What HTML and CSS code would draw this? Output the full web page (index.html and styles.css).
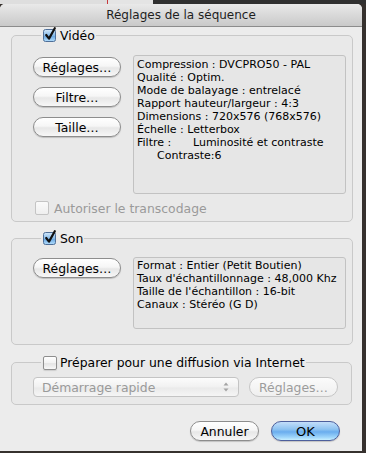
FILE: index.html
```html
<!DOCTYPE html>
<html>
    <head>
        <meta charset="utf-8">
        <link rel="stylesheet" href="styles.css">
    </head>
    <body>
        <div class="window">
            <div class="titlebar">Réglages de la séquence</div>

            <div class="content">
                <fieldset class="group group-video">
                    <legend>
                        <svg class="check" width="14" height="15" viewBox="0 0 14 15">
                            <defs>
                                <linearGradient id="blue" x1="0" y1="0" x2="0" y2="1">
                                    <stop offset="0" stop-color="#d3e8fa"/>
                                    <stop offset="0.5" stop-color="#86bbea"/>
                                    <stop offset="0.55" stop-color="#6aa8e2"/>
                                    <stop offset="1" stop-color="#b4defc"/>
                                </linearGradient>
                            </defs>
                            <rect x="0.5" y="2.5" width="12" height="12" rx="2" fill="url(#blue)" stroke="#4f6f98"/>
                            <path d="M3.2 8 L6 11.6 L11.8 1.2" fill="none" stroke="#111" stroke-width="2.2" stroke-linecap="round" stroke-linejoin="round"/>
                        </svg>
                        Vidéo
                    </legend>
                    <div class="group-row">
                        <div class="buttons">
                            <button class="btn">Réglages…</button>
                            <button class="btn">Filtre…</button>
                            <button class="btn">Taille…</button>
                        </div>
                        <div class="info info-video">
                            <div>Compression : DVCPRO50 - PAL</div>
                            <div>Qualité : Optim.</div>
                            <div>Mode de balayage : entrelacé</div>
                            <div>Rapport hauteur/largeur : 4:3</div>
                            <div>Dimensions : 720x576 (768x576)</div>
                            <div>Échelle : Letterbox</div>
                            <div><span class="tab">Filtre :</span>Luminosité et contraste</div>
                            <div class="indent">Contraste:6</div>
                        </div>
                    </div>
                    <div class="option disabled">
                        <span class="box box-disabled"></span>
                        Autoriser le transcodage
                    </div>
                </fieldset>

                <fieldset class="group group-sound">
                    <legend>
                        <svg class="check" width="14" height="15" viewBox="0 0 14 15">
                            <rect x="0.5" y="2.5" width="12" height="12" rx="2" fill="url(#blue)" stroke="#4f6f98"/>
                            <path d="M3.2 8 L6 11.6 L11.8 1.2" fill="none" stroke="#111" stroke-width="2.2" stroke-linecap="round" stroke-linejoin="round"/>
                        </svg>
                        Son
                    </legend>
                    <div class="group-row">
                        <div class="buttons">
                            <button class="btn">Réglages…</button>
                        </div>
                        <div class="info info-sound">
                            <div>Format : Entier (Petit Boutien)</div>
                            <div>Taux d'échantillonnage : 48,000 Khz</div>
                            <div>Taille de l'échantillon : 16-bit</div>
                            <div>Canaux : Stéréo (G D)</div>
                        </div>
                    </div>
                </fieldset>

                <fieldset class="group group-web">
                    <legend>
                        <span class="box"></span>
                        Préparer pour une diffusion via Internet
                    </legend>
                    <div class="web-row">
                        <div class="popup">
                            Démarrage rapide
                            <svg class="arrows" width="6" height="10" viewBox="0 0 6 10">
                                <path d="M0.5 3.5 L3 0.5 L5.5 3.5 Z" fill="#a4a4a4"/>
                                <path d="M0.5 6.5 L3 9.5 L5.5 6.5 Z" fill="#a4a4a4"/>
                            </svg>
                        </div>
                        <button class="btn btn-disabled">Réglages…</button>
                    </div>
                </fieldset>

                <div class="footer">
                    <button class="btn btn-footer">Annuler</button>
                    <button class="btn btn-footer btn-default">OK</button>
                </div>
            </div>
        </div>
    </body>
</html>
```

FILE: styles.css
```css
body {
    margin: 0;
    height: 453px;
    overflow: hidden;
    background-color: #36312e;
    background-image: linear-gradient(to right, #dedede 0, #dedede 107px, #c8383c 107px, #c8383c 108px, #e4e4e4 108px, #e4e4e4 153px, #303030 153px);
    background-size: 100% 4px;
    background-repeat: no-repeat;
    font-family: "DejaVu Sans", Verdana, sans-serif;
    color: #000;
}

.window {
    width: 362px;
    height: 447px;
    margin-top: 4px;
    background: #ececec;
    border-radius: 5px 5px 0 0;
    overflow: hidden;
}

.titlebar {
    height: 22px;
    line-height: 22px;
    text-align: center;
    font-size: 12px;
    color: #1e1e1e;
    background: linear-gradient(#e9e9e9, #c9c9c9);
    border-bottom: 1px solid #8c8c8c;
}

.content {
    padding: 0 10px 0 11px;
}

/* group boxes */
.group {
    margin: 0;
    padding: 0;
    border: 1px solid #c9c9c9;
    border-radius: 5px;
    background: #e9e9e9;
}

.group legend {
    display: flex;
    align-items: center;
    height: 15px;
    margin-left: 8px;
    padding: 0 1px 0 2px;
    font-size: 12.4px;
    gap: 3px;
}

.group-video {
    margin-top: 1px;
    padding: 12px 6px 6px 21px;
}

.group-sound {
    margin-top: 9px;
    padding: 11px 6px 15px 21px;
}

.group-web {
    margin-top: 10px;
    padding: 7px 13px 7px 21px;
}

.group-row {
    display: flex;
    gap: 12px;
}

.buttons {
    display: flex;
    flex-direction: column;
    gap: 10px;
    width: 88px;
    margin-top: 2px;
}

.group-sound .buttons {
    margin-top: 1px;
}

.info {
    width: 208px;
    padding: 2px 0 0 3px;
    border: 1px solid #c2c2c2;
    border-radius: 3px;
    background: #e6e6e6;
    font-size: 11px;
    line-height: 13px;
    white-space: nowrap;
}

.info-video {
    height: 135px;
}

.info-sound {
    height: 69px;
    padding-top: 1px;
}

.tab {
    display: inline-block;
    width: 56px;
}

.indent {
    padding-left: 20px;
}

/* check boxes */
.check {
    display: block;
    margin-top: -2px;
}

.box {
    display: block;
    width: 12px;
    height: 12px;
    border: 1px solid #8e8e8e;
    border-radius: 2px;
    background: linear-gradient(#ffffff, #f2f2f2 50%, #e4e4e4 55%, #f8f8f8);
    box-shadow: 0 1px 1px rgba(0, 0, 0, 0.12);
}

.box-disabled {
    border-color: #c4c4c4;
    background: linear-gradient(#fafafa, #efefef);
    box-shadow: none;
}

.option {
    display: flex;
    align-items: center;
    gap: 5px;
    height: 14px;
    margin: 7px 0 0 2px;
    font-size: 12.4px;
}

.disabled {
    color: #9a9a9a;
}

/* buttons */
.btn {
    height: 20px;
    padding: 0;
    border: 1px solid #8d8d8d;
    border-radius: 10px;
    background: linear-gradient(#ffffff 0%, #f6f6f6 45%, #e7e7e7 55%, #f7f7f7 100%);
    box-shadow: 0 1px 1px rgba(0, 0, 0, 0.18);
    font-family: "DejaVu Sans", Verdana, sans-serif;
    font-size: 12.4px;
    color: #000;
    line-height: 17px;
}

.btn-disabled {
    width: 89px;
    border-color: #c6c6c6;
    background: linear-gradient(#fbfbfb, #efefef);
    box-shadow: none;
    color: #9c9c9c;
}

.web-row {
    display: flex;
    gap: 10px;
}

.popup {
    display: flex;
    align-items: center;
    justify-content: space-between;
    box-sizing: border-box;
    width: 206px;
    height: 20px;
    padding: 0 9px 0 8px;
    border: 1px solid #c4c4c4;
    border-radius: 4px;
    background: linear-gradient(#fcfcfc, #f1f1f1 50%, #eaeaea 55%, #f5f5f5);
    font-size: 12.4px;
    color: #9a9a9a;
}

.arrows {
    display: block;
}

.footer {
    display: flex;
    justify-content: flex-end;
    gap: 12px;
    margin-top: 16px;
    padding-right: 12px;
}

.btn-footer {
    width: 69px;
}

.btn-default {
    border-color: #4d5f9c;
    background: linear-gradient(#c3defa 0%, #8ec3f1 40%, #6aadee 55%, #9fd6fb 85%, #c8efff 100%);
    font-size: 13px;
}
```
